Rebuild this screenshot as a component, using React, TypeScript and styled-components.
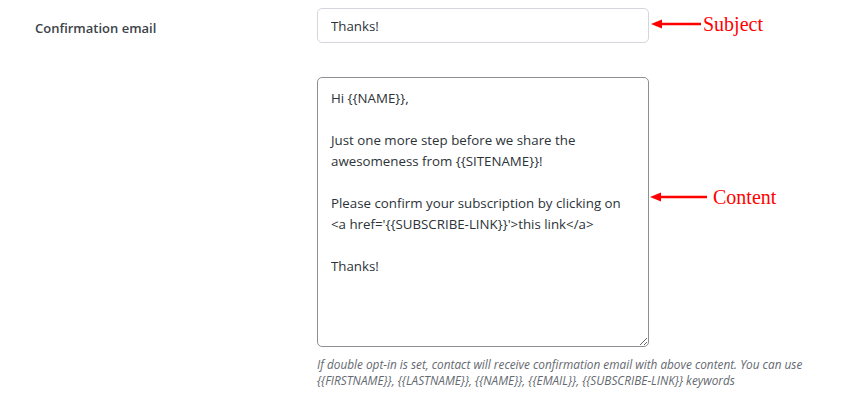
import React from "react";
import styled, { createGlobalStyle } from "styled-components";

const GlobalStyle = createGlobalStyle`
  html, body { margin: 0; padding: 0; background: #ffffff; }
  body { font-family: "Open Sans", "Noto Sans", sans-serif; }
`;

const Page = styled.div`
  padding-top: 8px;
  width: 847px;
  height: 401px;
  box-sizing: border-box;
`;

const Row = styled.div`
  display: flex;
  align-items: flex-start;
`;

const Label = styled.div`
  flex: 0 0 317px;
  box-sizing: border-box;
  padding: 10px 0 0 35px;
  font-size: 13px;
  line-height: 20px;
  font-weight: 600;
  color: #3c434a;
`;

const Fields = styled.div`
  display: flex;
  flex-direction: column;
  align-items: flex-start;
  flex: 1 1 auto;
  min-width: 0;
`;

const FieldWrap = styled.div<{ $gap?: number }>`
  position: relative;
  width: 332px;
  margin-top: ${(p) => p.$gap ?? 0}px;
`;

const SubjectInput = styled.input`
  display: block;
  width: 332px;
  height: 35px;
  box-sizing: border-box;
  margin: 0;
  padding: 0 13px;
  border: 1px solid #d3d6dc;
  border-radius: 5px;
  font-family: "Open Sans", "Noto Sans", sans-serif;
  font-size: 13.3px;
  color: #2c3338;
  background: #fff;
  outline: none;
`;

const ContentArea = styled.textarea`
  display: block;
  width: 332px;
  height: 270px;
  box-sizing: border-box;
  margin: 0;
  padding: 10px 13px;
  border: 1px solid #8c8f94;
  border-radius: 5px;
  font-family: "Open Sans", "Noto Sans", sans-serif;
  font-size: 13.3px;
  line-height: 21px;
  color: #2c3338;
  background: #fff;
  outline: none;
  resize: both;
  white-space: pre;
  overflow: hidden;
`;

const Description = styled.p`
  margin: 9px 0 0 0;
  font-family: "Open Sans", "Noto Sans", sans-serif;
  font-style: italic;
  font-size: 11.8px;
  line-height: 16px;
  color: #646970;
  white-space: nowrap;
`;

const Annotation = styled.div<{ $top: number; $offset: number; $gap: number }>`
  position: absolute;
  left: calc(100% + ${(p) => p.$offset}px);
  top: ${(p) => p.$top}px;
  display: flex;
  align-items: center;
  gap: ${(p) => p.$gap}px;
  white-space: nowrap;
`;

const AnnotationText = styled.span`
  font-family: "Liberation Serif", "Times New Roman", serif;
  font-size: 20px;
  line-height: 24px;
  color: #ff0000;
`;

const Arrow = ({ length }: { length: number }) => (
  <svg width={length} height={10} viewBox={`0 0 ${length} 10`} style={{ display: "block" }}>
    <line x1={8} y1={5} x2={length} y2={5} stroke="#ff0000" strokeWidth={2.4} />
    <polygon points="0,5 11,0.5 11,9.5" fill="#ff0000" />
  </svg>
);

const content = `Hi {{NAME}},

Just one more step before we share the
awesomeness from {{SITENAME}}!

Please confirm your subscription by clicking on
<a href='{{SUBSCRIBE-LINK}}'>this link</a>

Thanks!`;

export default function App() {
  return (
    <>
      <GlobalStyle />
      <Page>
        <Row>
          <Label>Confirmation email</Label>
          <Fields>
            <FieldWrap>
              <SubjectInput readOnly value="Thanks!" />
              <Annotation $top={4} $offset={2} $gap={2}>
                <Arrow length={50} />
                <AnnotationText>Subject</AnnotationText>
              </Annotation>
            </FieldWrap>
            <FieldWrap $gap={34}>
              <ContentArea readOnly value={content} />
              <Annotation $top={108} $offset={1} $gap={6}>
                <Arrow length={57} />
                <AnnotationText>Content</AnnotationText>
              </Annotation>
            </FieldWrap>
            <Description>
              If double opt-in is set, contact will receive confirmation email with above content. You can use
              <br />
              {"{{FIRSTNAME}}, {{LASTNAME}}, {{NAME}}, {{EMAIL}}, {{SUBSCRIBE-LINK}} keywords"}
            </Description>
          </Fields>
        </Row>
      </Page>
    </>
  );
}
